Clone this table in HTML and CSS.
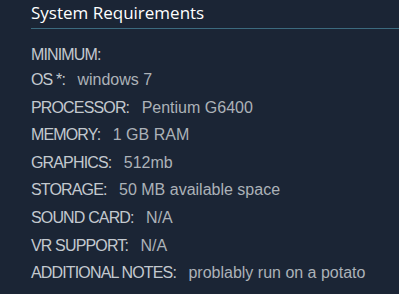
FILE: index.html
```html
<!DOCTYPE html>
<html lang="en">
<head>
    <meta charset="UTF-8">
    <title>System Requirements</title>
    <link rel="stylesheet" href="styles.css">
</head>
<body>
    <div class="sys-req">
        <h2>System Requirements</h2>
        <div class="req-body">
            <strong class="req-title">MINIMUM:</strong>
            <ul class="req-list">
                <li><strong>OS *:</strong> windows 7</li>
                <li><strong>PROCESSOR:</strong> Pentium G6400</li>
                <li><strong>MEMORY:</strong> 1 GB RAM</li>
                <li><strong>GRAPHICS:</strong> 512mb</li>
                <li><strong>STORAGE:</strong> 50 MB available space</li>
                <li><strong>SOUND CARD:</strong> N/A</li>
                <li><strong>VR SUPPORT:</strong> N/A</li>
                <li><strong>ADDITIONAL NOTES:</strong> problably run on a potato</li>
            </ul>
        </div>
    </div>
</body>
</html>
```

FILE: styles.css
```css
body {
    margin: 0;
    background: #1b2535;
    font-family: "Liberation Sans", Arial, sans-serif;
    overflow: hidden;
}
.sys-req {
    padding: 0 0 0 31px;
}
h2 {
    margin: 0;
    padding: 3px 0 5px;
    font-family: "Open Sans", sans-serif;
    font-size: 17px;
    font-weight: normal;
    color: #ffffff;
    line-height: 20px;
    border-bottom: 1px solid #3c6a7e;
}
.req-body {
    padding-top: 16px;
    font-size: 16px;
    color: #acb2b8;
}
.req-title {
    display: block;
    font-weight: normal;
    letter-spacing: -0.85px;
    color: #c3c9cf;
    line-height: 19px;
}
.req-list {
    list-style: none;
    margin: 6px 0 0;
    padding: 0;
}
.req-list li {
    line-height: 19px;
    margin-bottom: 8.6px;
}
.req-list strong {
    font-weight: normal;
    letter-spacing: -0.85px;
    color: #c3c9cf;
    margin-right: 8px;
}
```
